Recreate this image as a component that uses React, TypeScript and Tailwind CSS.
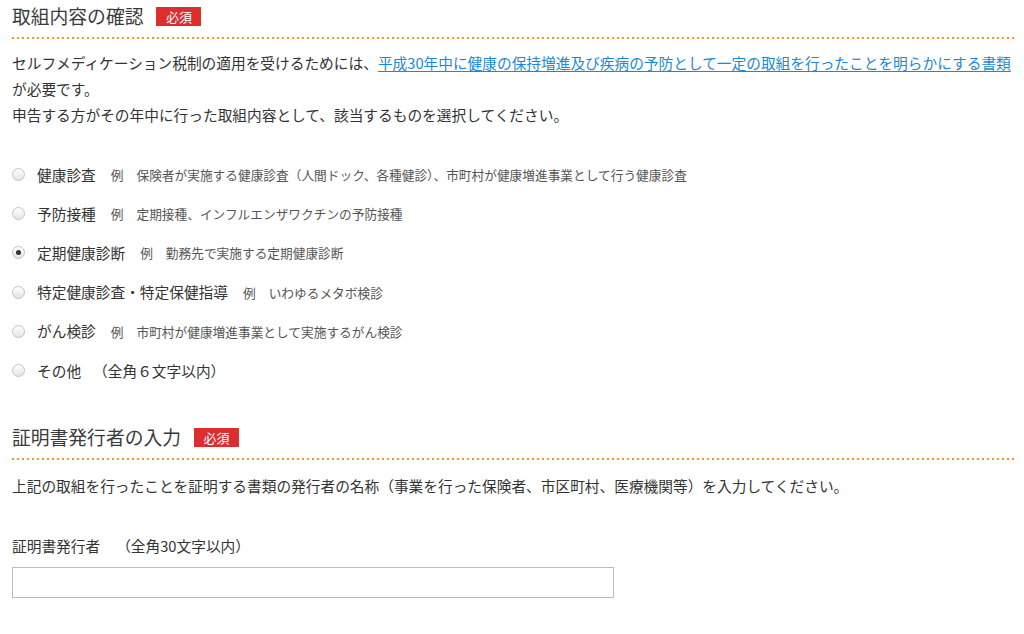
import { useState } from "react"

const font = { fontFamily: '"Noto Sans CJK JP", "Noto Sans", sans-serif' }

interface Option {
  id: string
  label: string
  example?: string
  note?: string
}

const options: Option[] = [
  { id: "kenshin", label: "健康診査", example: "保険者が実施する健康診査（人間ドック、各種健診）、市町村が健康増進事業として行う健康診査" },
  { id: "yobou", label: "予防接種", example: "定期接種、インフルエンザワクチンの予防接種" },
  { id: "teiki", label: "定期健康診断", example: "勤務先で実施する定期健康診断" },
  { id: "tokutei", label: "特定健康診査・特定保健指導", example: "いわゆるメタボ検診" },
  { id: "gan", label: "がん検診", example: "市町村が健康増進事業として実施するがん検診" },
  { id: "other", label: "その他", note: "（全角６文字以内）" },
]

function SectionTitle({ title }: { title: string }) {
  return (
    <>
      <div className="flex h-[32px] items-center gap-[13px]">
        <h2 className="text-[18.8px] text-[#3a3a3a] leading-none">{title}</h2>
        <span className="flex h-[19px] w-[45px] items-center justify-center bg-[#dc2e2e] text-[13px] text-white leading-none">
          必須
        </span>
      </div>
      <div className="mt-[5px] h-[2px] w-full bg-[linear-gradient(to_right,#f29a1f_2px,transparent_2px)] bg-[length:5px_2px] bg-repeat-x" />
    </>
  )
}

function Radio({ checked }: { checked: boolean }) {
  return (
    <span className="flex h-[13px] w-[13px] shrink-0 items-center justify-center rounded-full border border-[#c4c4c4] bg-[linear-gradient(to_bottom,#ffffff,#e4e4e4)]">
      {checked && <span className="h-[5px] w-[5px] rounded-full bg-[#333]" />}
    </span>
  )
}

export default function App() {
  const [selected, setSelected] = useState("teiki")

  return (
    <div className="min-h-[634px] w-full bg-white pl-[12px] pr-[10px] text-[#333]" style={font}>
      {/* 取組内容の確認 */}
      <SectionTitle title="取組内容の確認" />

      <p className="mt-[11px] text-[14.7px] leading-[26px]">
        セルフメディケーション税制の適用を受けるためには、
        <a href="#" className="text-[#1a8ad4] underline underline-offset-2">
          平成30年中に健康の保持増進及び疾病の予防として一定の取組を行ったことを明らかにする書類
        </a>
        <br />
        が必要です。
        <br />
        申告する方がその年中に行った取組内容として、該当するものを選択してください。
      </p>

      <ul className="mt-[27px]">
        {options.map((opt) => (
          <li
            key={opt.id}
            className="flex h-[39.2px] cursor-pointer items-center"
            onClick={() => setSelected(opt.id)}
          >
            <Radio checked={selected === opt.id} />
            <span className="ml-[12px] text-[14.7px] text-[#333]">{opt.label}</span>
            {opt.example && (
              <>
                <span className="ml-[15px] text-[12.7px] text-[#555]">例</span>
                <span className="ml-[13px] text-[12.7px] text-[#555]">{opt.example}</span>
              </>
            )}
            {opt.note && <span className="ml-[12px] text-[14.7px] text-[#333]">{opt.note}</span>}
          </li>
        ))}
      </ul>

      {/* 証明書発行者の入力 */}
      <div className="mt-[31px]">
        <SectionTitle title="証明書発行者の入力" />
      </div>

      <p className="mt-[13px] text-[14.7px] leading-[26px]">
        上記の取組を行ったことを証明する書類の発行者の名称（事業を行った保険者、市区町村、医療機関等）を入力してください。
      </p>

      <label className="mt-[36px] flex text-[14.7px] leading-[22px]">
        <span>証明書発行者</span>
        <span className="ml-[16px]">（全角30文字以内）</span>
      </label>
      <input
        type="text"
        className="mt-[10px] block h-[31px] w-[602px] border border-[#bdbdbd] px-2 text-[14px] outline-none"
      />
    </div>
  )
}
